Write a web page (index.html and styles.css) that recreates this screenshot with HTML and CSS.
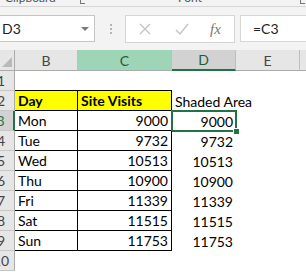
FILE: index.html
```html
<!DOCTYPE html>
<html lang="en">

<head>
    <meta charset="UTF-8">
    <title>Shaded Area</title>
    <link rel="stylesheet" href="styles.css">
</head>

<body>

    <div class="ribbon">
        <span class="group-label clip">Clipboard</span>
        <span class="launcher l1"></span>
        <span class="group-label font">Font</span>
        <span class="launcher l2"></span>
    </div>

    <div class="formula-bar">
        <div class="name-box">
            <span>D3</span>
            <svg class="drop" width="8" height="4" viewBox="0 0 8 4"><path d="M0 0h8L4 4z" fill="#7a7a7a"/></svg>
        </div>
        <div class="dots"><i></i><i></i><i></i></div>
        <div class="fn-box">
            <svg class="cancel" width="14" height="14" viewBox="0 0 14 14"><path d="M2 2l10 10M12 2L2 12" stroke="#c4c4c4" stroke-width="1.4" fill="none"/></svg>
            <svg class="enter" width="16" height="14" viewBox="0 0 16 14"><path d="M2 8l4 4 8-10" stroke="#c4c4c4" stroke-width="1.4" fill="none"/></svg>
            <span class="fx">fx</span>
        </div>
        <div class="formula">=C3</div>
    </div>

    <div class="sheet">
        <div class="corner"></div>
        <div class="colhead">B</div>
        <div class="colhead hilite">C</div>
        <div class="colhead active">D</div>
        <div class="colhead">E</div>
        <div class="colhead"></div>

        <div class="rowhead">1</div>
        <div class="cell top-edge"></div>
        <div class="cell top-edge"></div>
        <div class="cell"></div>
        <div class="cell"></div>
        <div class="cell"></div>

        <div class="rowhead">2</div>
        <div class="cell t yellow bold">Day</div>
        <div class="cell t yellow bold">Site Visits</div>
        <div class="cell">Shaded Area</div>
        <div class="cell"></div>
        <div class="cell"></div>

        <div class="rowhead active">3</div>
        <div class="cell t">Mon</div>
        <div class="cell t num">9000</div>
        <div class="cell num selected">9000<span class="handle"></span></div>
        <div class="cell"></div>
        <div class="cell"></div>

        <div class="rowhead">4</div>
        <div class="cell t">Tue</div>
        <div class="cell t num">9732</div>
        <div class="cell num">9732</div>
        <div class="cell"></div>
        <div class="cell"></div>

        <div class="rowhead">5</div>
        <div class="cell t">Wed</div>
        <div class="cell t num">10513</div>
        <div class="cell num">10513</div>
        <div class="cell"></div>
        <div class="cell"></div>

        <div class="rowhead">6</div>
        <div class="cell t">Thu</div>
        <div class="cell t num">10900</div>
        <div class="cell num">10900</div>
        <div class="cell"></div>
        <div class="cell"></div>

        <div class="rowhead">7</div>
        <div class="cell t">Fri</div>
        <div class="cell t num">11339</div>
        <div class="cell num">11339</div>
        <div class="cell"></div>
        <div class="cell"></div>

        <div class="rowhead">8</div>
        <div class="cell t">Sat</div>
        <div class="cell t num">11515</div>
        <div class="cell num">11515</div>
        <div class="cell"></div>
        <div class="cell"></div>

        <div class="rowhead">9</div>
        <div class="cell t">Sun</div>
        <div class="cell t num">11753</div>
        <div class="cell num">11753</div>
        <div class="cell"></div>
        <div class="cell"></div>

        <div class="rowhead">10</div>
        <div class="cell"></div>
        <div class="cell"></div>
        <div class="cell"></div>
        <div class="cell"></div>
        <div class="cell"></div>
    </div>

</body>

</html>
```

FILE: styles.css
```css
body {
    margin: 0;
    width: 306px;
    height: 272px;
    overflow: hidden;
    background-color: #fff;
    font-family: Lato, "Open Sans", sans-serif;
}

.ribbon {
    position: relative;
    height: 6px;
    background-color: #f3f3f3;
    border-bottom: 1px solid #d6d6d6;
    overflow: hidden;
    font-size: 12px;
    color: #555;
}

.group-label {
    position: absolute;
    top: -8px;
    line-height: 12px;
}

.group-label.clip {
    left: 5px;
}

.group-label.font {
    left: 178px;
}

.launcher {
    position: absolute;
    top: 0;
    width: 4px;
    height: 3px;
    border-left: 1px solid #777;
    border-bottom: 1px solid #777;
}

.launcher.l1 {
    left: 80px;
}

.launcher.l2 {
    left: 300px;
}

.formula-bar {
    display: flex;
    align-items: flex-start;
    height: 35px;
    padding-top: 8px;
    background-color: #f3f3f3;
}

.name-box {
    display: flex;
    align-items: center;
    justify-content: space-between;
    box-sizing: border-box;
    width: 101px;
    height: 27px;
    margin-left: -6px;
    padding: 0 5px 0 7px;
    background-color: #fff;
    border: 1px solid #c6c6c6;
    font-size: 14px;
    color: #222;
}

.dots {
    display: flex;
    flex-direction: column;
    gap: 2px;
    margin: 9px 0 0 15px;
}

.dots i {
    width: 2px;
    height: 2px;
    background-color: #b4b4b4;
}

.fn-box {
    display: flex;
    align-items: center;
    box-sizing: border-box;
    width: 110px;
    height: 28px;
    margin-left: 13px;
    padding-left: 12px;
    background-color: #fff;
    border: 1px solid #d6d6d6;
}

.fn-box .enter {
    margin-left: 22px;
}

.fx {
    margin-left: 20px;
    font-family: "Liberation Serif", serif;
    font-style: italic;
    font-size: 15px;
    color: #777;
}

.formula {
    box-sizing: border-box;
    flex: 1;
    height: 27px;
    margin-left: 5px;
    padding-left: 12px;
    line-height: 25px;
    background-color: #fff;
    border: 1px solid #d6d6d6;
    border-right: none;
    font-size: 14px;
    color: #222;
}

.sheet {
    display: grid;
    grid-template-columns: 27px 63px 94px 64px 64px 64px;
    grid-template-rows: 21px repeat(10, 20px);
    margin-left: -12px;
    font-size: 14px;
    color: #000;
}

.corner {
    position: relative;
    background-color: #e6e6e6;
    border-right: 1px solid #ababab;
    border-bottom: 1px solid #ababab;
}

.corner::after {
    content: "";
    position: absolute;
    right: 2px;
    bottom: 3px;
    border-left: 10px solid transparent;
    border-bottom: 10px solid #b9b9b9;
}

.colhead {
    display: flex;
    align-items: center;
    justify-content: center;
    background-color: #e6e6e6;
    border-right: 1px solid #bebebe;
    border-bottom: 1px solid #ababab;
    color: #444;
    font-size: 14px;
}

.colhead.hilite {
    background-color: #9fd5b7;
    color: #1e5c3a;
}

.colhead.active {
    background-color: #d2d2d2;
    border-bottom: 2px solid #217346;
    color: #1e5c3a;
}

.rowhead {
    display: flex;
    align-items: center;
    justify-content: center;
    background-color: #e6e6e6;
    border-right: 1px solid #ababab;
    border-bottom: 1px solid #c6c6c6;
    color: #444;
    font-size: 14px;
}

.rowhead.active {
    background-color: #d2d2d2;
    border-right: 2px solid #217346;
    color: #217346;
}

.cell {
    position: relative;
    display: flex;
    align-items: center;
    padding: 0 3px;
    white-space: nowrap;
    overflow: visible;
}

.cell.top-edge {
    border-bottom: 1px solid #000;
}

.cell.t {
    border-right: 1px solid #000;
    border-bottom: 1px solid #000;
}

.cell.yellow {
    background-color: #ffff00;
}

.cell.bold {
    font-weight: bold;
}

.cell.num {
    justify-content: flex-end;
}

.cell.selected {
    outline: 2px solid #217346;
    outline-offset: -1px;
}

.handle {
    position: absolute;
    right: -4px;
    bottom: -4px;
    width: 5px;
    height: 5px;
    background-color: #217346;
    border: 1px solid #fff;
}
```
